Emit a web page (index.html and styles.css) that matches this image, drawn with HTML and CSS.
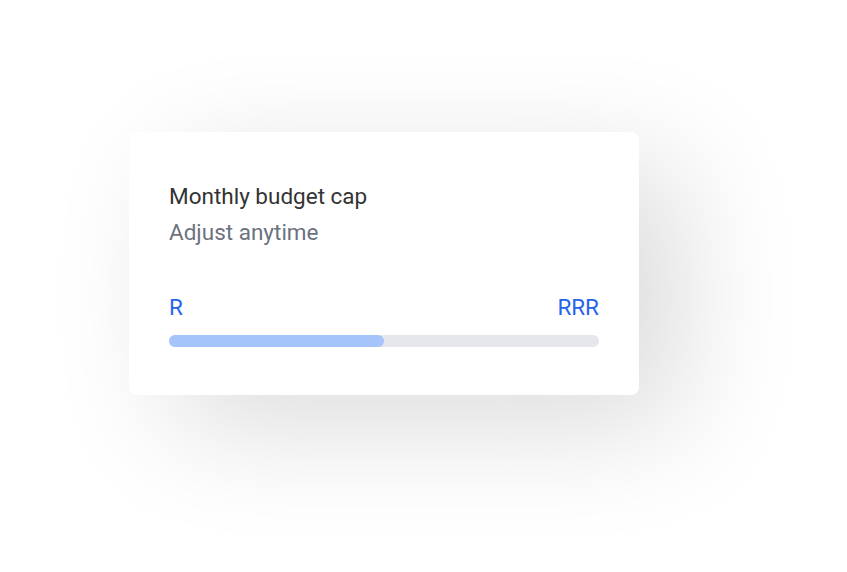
FILE: index.html
```html
<!DOCTYPE html>
<html>
<head>
    <meta charset="UTF-8">
    <meta name="viewport" content="width=device-width, initial-scale=1.0">
    <title>Budget cap</title>
    <link rel="stylesheet" href="styles.css">
</head>
<body>
    <div class="page">
        <div class="card">
            <div class="title">Monthly budget cap</div>
            <div class="subtitle">Adjust anytime</div>
            <div class="range-labels">
                <span>R</span>
                <span>RRR</span>
            </div>
            <div class="track">
                <div class="fill" style="width: 50%"></div>
            </div>
        </div>
    </div>
</body>
</html>
```

FILE: styles.css
```css
body {
    margin: 0;
    background: #ffffff;
    font-family: Roboto, 'Liberation Sans', Arial, sans-serif;
}
.page {
    min-height: 100vh;
    box-sizing: border-box;
    padding: 132px 0 0 129px;
    overflow: hidden;
}
.card {
    width: 510px;
    height: 263px;
    box-sizing: border-box;
    padding: 46px 40px 0 40px;
    background: #ffffff;
    border-radius: 8px;
    box-shadow: 42px 32px 120px rgba(0,0,0,0.14);
}
.title {
    font-size: 22.5px;
    line-height: 36px;
    color: #333333;
}
.subtitle {
    font-size: 22.5px;
    line-height: 37px;
    color: #6b7280;
}
.range-labels {
    display: flex;
    justify-content: space-between;
    margin-top: 38px;
    font-size: 22.5px;
    line-height: 36px;
    color: #2563eb;
}
.track {
    margin-top: 10px;
    height: 12px;
    border-radius: 6px;
    background: #e5e7eb;
}
.fill {
    height: 100%;
    border-radius: 6px;
    background: #a4c4fa;
}
```
